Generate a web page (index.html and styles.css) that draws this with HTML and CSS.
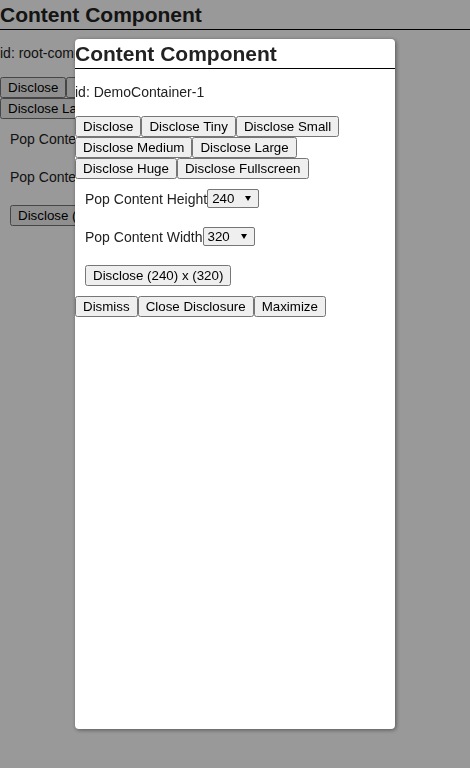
FILE: index.html
```html
<!DOCTYPE html>
<html lang="en">
<head>
<meta charset="utf-8">
<title>Content Component</title>
<link rel="stylesheet" href="styles.css">
</head>
<body>
<div class="component">
  <h2 class="title">Content Component</h2>
  <div class="ident">id: root-component</div>
  <div class="btns">
    <button>Disclose</button><button>Disclose Tiny</button><button>Disclose Small</button><button>Disclose Medium</button><button>Disclose Large</button><button>Disclose Huge</button><button>Disclose Fullscreen</button>
  </div>
  <div class="fields">
    <div class="field">Pop Content Height<span class="sel"><select><option>240</option><option>120</option><option>320</option><option>480</option></select></span></div>
    <div class="field">Pop Content Width<span class="sel"><select><option>320</option><option>120</option><option>240</option><option>480</option></select></span></div>
    <div class="field"><button>Disclose (240) x (320)</button></div>
  </div>
</div>

<div class="overlay">
  <div class="popup">
    <h2 class="title">Content Component</h2>
    <div class="ident">id: DemoContainer-1</div>
    <div class="btns">
      <button>Disclose</button><button>Disclose Tiny</button><button>Disclose Small</button><button>Disclose Medium</button><button>Disclose Large</button><button>Disclose Huge</button><button>Disclose Fullscreen</button>
    </div>
    <div class="fields">
      <div class="field">Pop Content Height<span class="sel"><select><option>240</option><option>120</option><option>320</option><option>480</option></select></span></div>
      <div class="field">Pop Content Width<span class="sel"><select><option>320</option><option>120</option><option>240</option><option>480</option></select></span></div>
      <div class="field"><button>Disclose (240) x (320)</button></div>
    </div>
    <div class="btns">
      <button>Dismiss</button><button>Close Disclosure</button><button>Maximize</button>
    </div>
  </div>
</div>
</body>
</html>
```

FILE: styles.css
```css
html, body {
  margin: 0;
  padding: 0;
  background: #ffffff;
}
body {
  font-family: "Liberation Sans", Arial, sans-serif;
  font-size: 14px;
  color: #222222;
}
button, select {
  font-family: "Liberation Sans", Arial, sans-serif;
  font-size: 13.333px;
  margin: 0;
}
.title {
  margin: 0;
  padding: 3px 0 2px;
  font-size: 21px;
  font-weight: bold;
  line-height: 24px;
  border-bottom: 1px solid #000000;
  color: #222222;
  white-space: nowrap;
}
.ident {
  padding: 15px 0;
  line-height: 17px;
  white-space: nowrap;
}
.btns {
  display: flex;
  flex-wrap: wrap;
}
.fields {
  display: flex;
  flex-direction: column;
  align-items: flex-start;
  gap: 19px;
  padding: 10px;
}
.field {
  display: flex;
  align-items: center;
  white-space: nowrap;
}
.sel {
  position: relative;
  display: inline-block;
}
.sel select {
  appearance: none;
  -webkit-appearance: none;
  display: block;
  width: 52px;
  height: 19px;
  padding: 0 0 0 4px;
  background: #efefef;
  color: #000000;
  border: 1px solid #767676;
  border-radius: 2px;
  line-height: 17px;
}
.sel::after {
  content: "";
  position: absolute;
  right: 8px;
  top: 7px;
  width: 0;
  height: 0;
  border-left: 3px solid transparent;
  border-right: 3px solid transparent;
  border-top: 5px solid #000000;
  pointer-events: none;
}
.overlay {
  position: fixed;
  inset: 0;
  background: rgba(0, 0, 0, 0.4);
  display: flex;
  align-items: center;
  justify-content: center;
}
.popup {
  width: 320px;
  height: 690px;
  background: #ffffff;
  border-radius: 4px;
  box-shadow: 1px 1px 4px rgba(0, 0, 0, 0.45);
  overflow: hidden;
}
```
